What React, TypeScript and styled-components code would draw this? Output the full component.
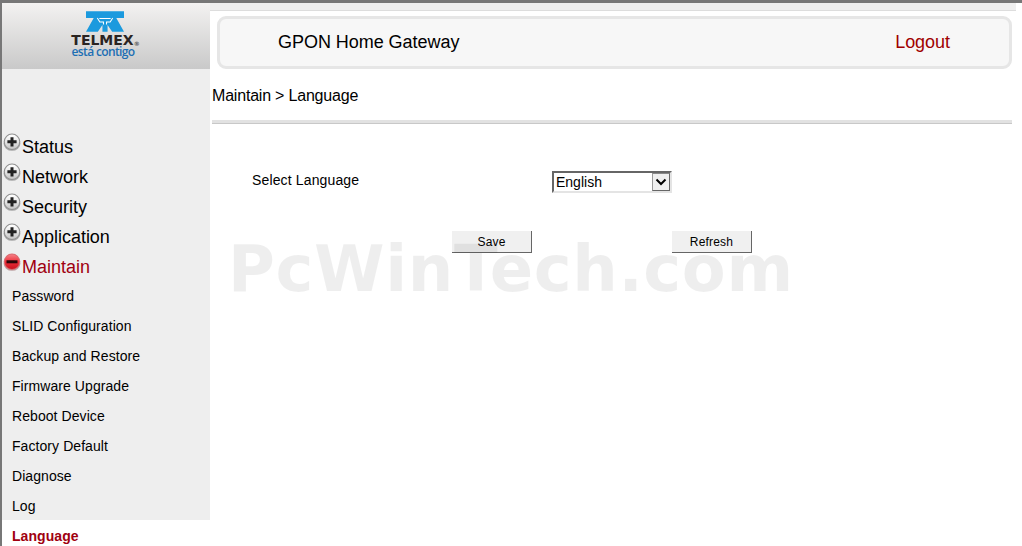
import React from 'react'
import styled, { createGlobalStyle } from 'styled-components'

const GlobalStyle = createGlobalStyle`
    html, body {
        margin: 0;
        padding: 0;
        background: #fff;
        overflow: hidden;
    }
    body {
        font-family: "Liberation Sans", Arial, sans-serif;
        color: #000;
    }
`

const Page = styled.div`
    position: relative;
    display: flex;
    width: 1022px;
    height: 546px;
    box-sizing: border-box;
    overflow: hidden;
    border-top: 3px solid #777;
    border-left: 2px solid #777;
`

const Sidebar = styled.nav`
    flex: 0 0 208px;
    display: flex;
    flex-direction: column;
`

const LogoBar = styled.div`
    height: 66px;
    flex: none;
    display: flex;
    flex-direction: column;
    align-items: center;
    padding-top: 8px;
    padding-left: 2px;
    box-sizing: border-box;
    background: linear-gradient(#f3f2f1, #c9c9c9);
`

const LogoWord = styled.div`
    font-family: "DejaVu Sans", sans-serif;
    font-weight: 700;
    font-size: 14px;
    line-height: 12px;
    color: #2a2422;
    margin-top: 2px;
    margin-left: -3px;
    sup {
        font-size: 6px;
        line-height: 0;
        vertical-align: -1px;
        color: #555;
    }
`

const LogoTag = styled.div`
    font-family: "Open Sans", sans-serif;
    font-weight: 600;
    font-size: 12px;
    line-height: 11px;
    letter-spacing: -0.65px;
    color: #1d6fb4;
    margin-left: -8px;
    margin-top: 0;
`

const MenuArea = styled.div`
    flex: 1;
    display: flex;
    flex-direction: column;
    padding-top: 61px;
    background: #eee;
`

const GroupRow = styled.div<{ $open?: boolean }>`
    height: 30px;
    box-sizing: border-box;
    display: flex;
    align-items: center;
    flex: none;
    padding-left: 1px;
    padding-top: 5px;
    font-size: 18px;
    letter-spacing: -0.02px;
    color: ${(p) => (p.$open ? '#a00010' : '#000')};

    svg {
        margin-top: -11px;
        margin-right: 1px;
    }
`

const SubItem = styled.div<{ $active?: boolean }>`
    height: 30px;
    box-sizing: border-box;
    flex: none;
    display: flex;
    align-items: center;
    padding-left: 10px;
    padding-top: 2px;
    font-size: 14px;
    letter-spacing: 0.07px;
    font-weight: ${(p) => (p.$active ? 700 : 400)};
    color: ${(p) => (p.$active ? '#a00010' : '#000')};
    background: ${(p) => (p.$active ? '#fff' : 'transparent')};
`

const Main = styled.main`
    flex: 1;
    display: flex;
    flex-direction: column;
    padding-left: 2px;
    padding-right: 10px;
`

const TopBand = styled.div`
    height: 7px;
    flex: none;
    margin: 0 -4px 0 -2px;
    background: #efefef;
    border-bottom: 1px solid #ddd;
`

const HeaderWrap = styled.div`
    margin-left: 5px;
    margin-top: 5px;
`

const HeaderCard = styled.header`
    height: 53px;
    box-sizing: border-box;
    display: flex;
    align-items: center;
    justify-content: space-between;
    padding: 0 59px 0 58px;
    background: #f7f7f7;
    border: 3px solid #e6e6e6;
    border-radius: 9px;
    font-size: 18px;
    letter-spacing: -0.04px;
`

const LogoutLink = styled.span`
    color: #a00000;
`

const Breadcrumb = styled.div`
    height: 51px;
    box-sizing: border-box;
    padding-top: 3px;
    display: flex;
    align-items: center;
    font-size: 16px;
    letter-spacing: -0.2px;
`

const Divider = styled.div`
    height: 4px;
    background: #e2e2e2;
    border-bottom: 1px solid #c8c8c8;
    box-sizing: border-box;
    flex: none;
`

const Form = styled.form`
    display: flex;
    flex-direction: column;
    padding-top: 47px;
`

const FormRow = styled.div`
    display: grid;
    grid-template-columns: 300px 120px;
    align-items: center;
    padding-left: 40px;
    height: 22px;
    font-size: 14px;
`

const FieldLabel = styled.span`
    letter-spacing: 0.14px;
    margin-top: -4px;
`

const SelectBox = styled.div`
    height: 22px;
    box-sizing: border-box;
    display: flex;
    align-items: center;
    justify-content: space-between;
    background: #fff;
    border-top: 2px solid #666;
    border-left: 2px solid #666;
    border-right: 2px solid #e4e4e4;
    border-bottom: 2px solid #e4e4e4;
    padding-left: 2px;
    font-size: 14px;
`

const ArrowButton = styled.div`
    width: 18px;
    height: 18px;
    box-sizing: border-box;
    display: flex;
    align-items: center;
    justify-content: center;
    background: #efefef;
    border: 1px solid #666;
    border-top-color: #888;
    border-left-color: #999;
`

const ButtonRow = styled.div`
    display: flex;
    gap: 140px;
    padding-left: 240px;
    margin-top: 38px;
`

const PlainButton = styled.button`
    width: 80px;
    height: 22px;
    padding: 0;
    box-sizing: border-box;
    background: #f0f0f0;
    border: none;
    border-right: 1px solid #666;
    border-bottom: 1px solid #666;
    font-family: "Liberation Sans", Arial, sans-serif;
    font-size: 12px;
    letter-spacing: 0.2px;
    color: #000;
`

const Watermark = styled.div`
    position: absolute;
    left: 226px;
    top: 229px;
    font-family: "DejaVu Sans", sans-serif;
    font-weight: 700;
    font-size: 64px;
    line-height: 74px;
    letter-spacing: 0.6px;
    color: rgba(0, 0, 0, 0.065);
    white-space: nowrap;
    pointer-events: none;
`

const TelmexMark = () => (
    <svg width="38" height="21" viewBox="0 0 37 20" style={{ display: 'block', marginLeft: '-4px' }}>
        <path
            fill="#1b9ade"
            d="M0 0H37V6.5H29.5L37 20H25.5L21 13.5V20H16V13.5L11.5 20H0L7.5 6.5H0Z"
        />
        <path
            fill="none"
            stroke="#fff"
            strokeWidth="1"
            d="M11 6.5L13.5 10.5H17V13M26 6.5L23.5 10.5H20V13M13 7H24"
        />
    </svg>
)

const ToggleIcon = ({ open }: { open?: boolean }) => {
    const id = open ? 'toggleRed' : 'toggleGray'
    return (
        <svg width="18" height="18" viewBox="0 0 18 18">
            <defs>
                <linearGradient id={id} x1="0" y1="0" x2="0" y2="1">
                    <stop offset="0" stopColor={open ? '#f47e84' : '#ffffff'} />
                    <stop offset="0.5" stopColor={open ? '#ee2f3a' : '#e6e6e6'} />
                    <stop offset="1" stopColor={open ? '#c8141f' : '#c4c4c4'} />
                </linearGradient>
            </defs>
            <ellipse cx="9" cy="10.4" rx="8.4" ry="7.4" fill={open ? '#bda0a2' : '#a8a8a8'} />
            <circle cx="9" cy="8.8" r="8.2" fill={open ? '#d9686e' : '#8f8f8f'} />
            <circle cx="9" cy="8.8" r="7.2" fill={`url(#${id})`} />
            {open ? (
                <rect x="3.5" y="7.3" width="11" height="3" fill="#2a0608" />
            ) : (
                <path d="M7.5 4.2H10.5V7.3H13.6V10.3H10.5V13.4H7.5V10.3H4.4V7.3H7.5Z" fill="#222" />
            )}
        </svg>
    )
}

const groups = ['Status', 'Network', 'Security', 'Application']
const maintainItems = [
    'Password',
    'SLID Configuration',
    'Backup and Restore',
    'Firmware Upgrade',
    'Reboot Device',
    'Factory Default',
    'Diagnose',
    'Log',
]

export default function App() {
    return (
        <Page>
            <GlobalStyle />
            <Sidebar>
                <LogoBar>
                    <TelmexMark />
                    <LogoWord>
                        TELMEX<sup>®</sup>
                    </LogoWord>
                    <LogoTag>está contigo</LogoTag>
                </LogoBar>
                <MenuArea>
                    {groups.map((g) => (
                        <GroupRow key={g}>
                            <ToggleIcon />
                            {g}
                        </GroupRow>
                    ))}
                    <GroupRow $open>
                        <ToggleIcon open />
                        Maintain
                    </GroupRow>
                    {maintainItems.map((item) => (
                        <SubItem key={item}>{item}</SubItem>
                    ))}
                    <SubItem $active>Language</SubItem>
                </MenuArea>
            </Sidebar>
            <Main>
                <TopBand />
                <HeaderWrap>
                    <HeaderCard>
                        <span>GPON Home Gateway</span>
                        <LogoutLink>Logout</LogoutLink>
                    </HeaderCard>
                </HeaderWrap>
                <Breadcrumb>Maintain &gt; Language</Breadcrumb>
                <Divider />
                <Form>
                    <FormRow>
                        <FieldLabel>Select Language</FieldLabel>
                        <SelectBox>
                            English
                            <ArrowButton>
                                <svg width="12" height="8" viewBox="0 0 12 8">
                                    <path d="M1.5 1.5L6 6L10.5 1.5" fill="none" stroke="#000" strokeWidth="2" />
                                </svg>
                            </ArrowButton>
                        </SelectBox>
                    </FormRow>
                    <ButtonRow>
                        <PlainButton type="button">Save</PlainButton>
                        <PlainButton type="button">Refresh</PlainButton>
                    </ButtonRow>
                </Form>
            </Main>
            <Watermark>PcWinTech.com</Watermark>
        </Page>
    )
}
